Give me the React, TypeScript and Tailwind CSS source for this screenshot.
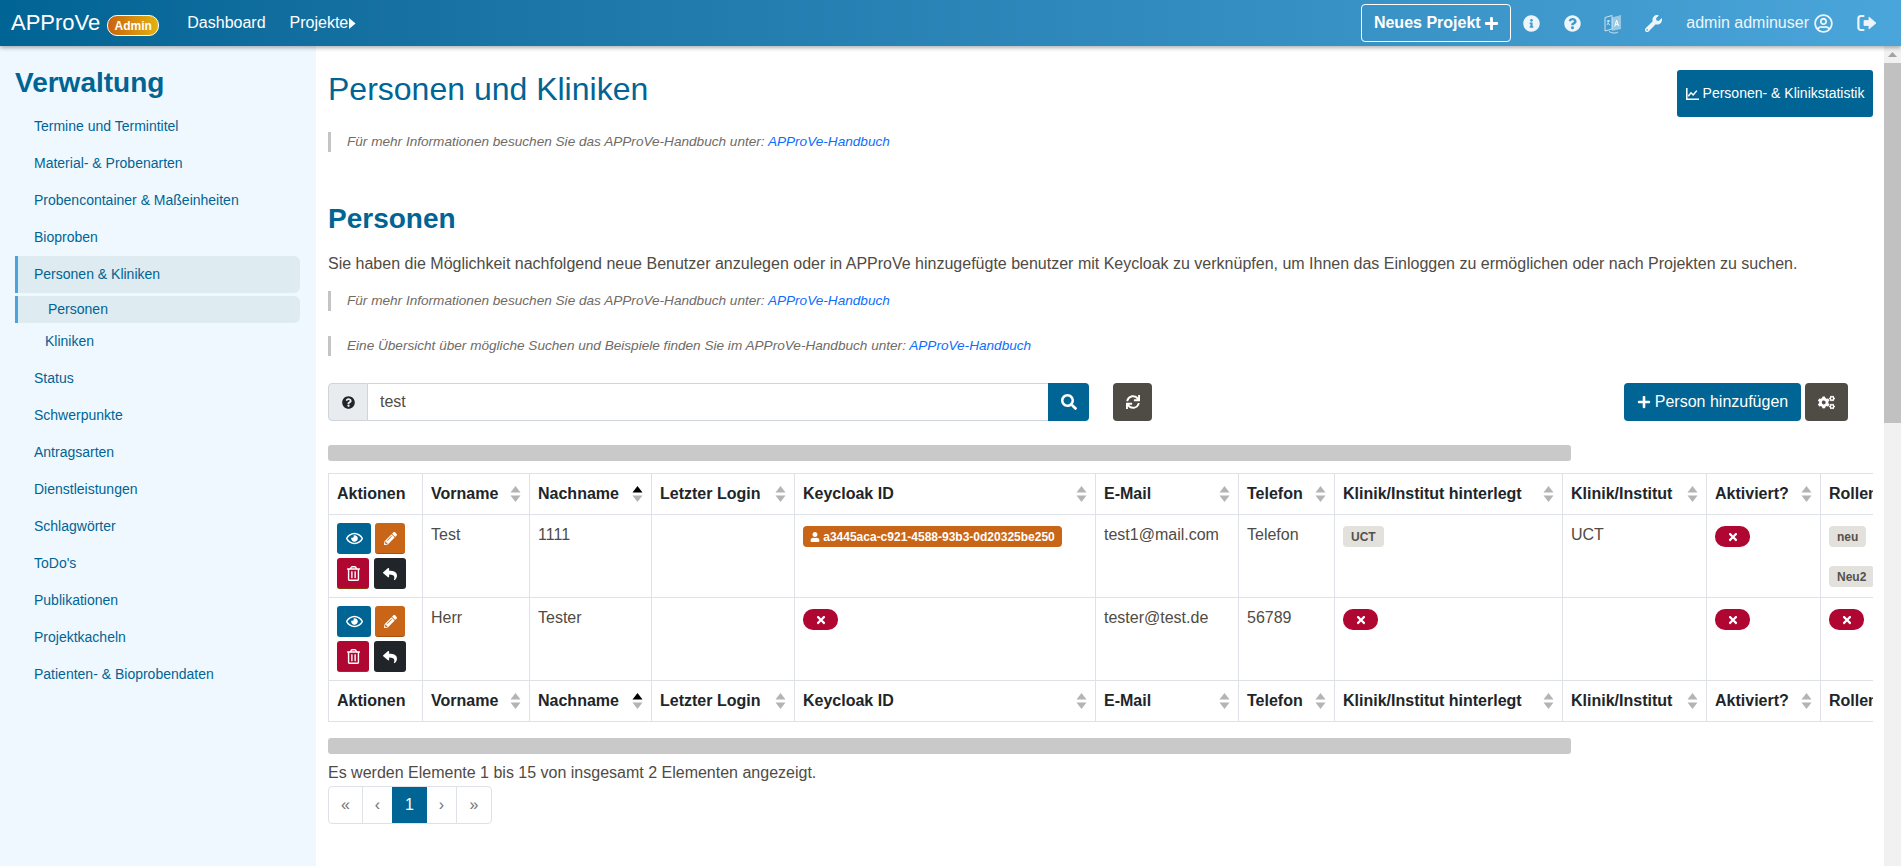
import type { ReactNode } from "react";
import {
  FaCogs,
  FaInfoCircle,
  FaPencilAlt,
  FaPlus,
  FaQuestionCircle,
  FaRegEye,
  FaRegTrashAlt,
  FaRegUserCircle,
  FaReply,
  FaSearch,
  FaSync,
  FaTimes,
  FaUser,
  FaWrench,
} from "react-icons/fa";

const menu = [
  "Termine und Termintitel",
  "Material- & Probenarten",
  "Probencontainer & Maßeinheiten",
  "Bioproben",
];
const menuAfter = [
  "Status",
  "Schwerpunkte",
  "Antragsarten",
  "Dienstleistungen",
  "Schlagwörter",
  "ToDo's",
  "Publikationen",
  "Projektkacheln",
  "Patienten- & Bioprobendaten",
];

const columns = [
  { label: "Aktionen", width: 94, sort: false },
  { label: "Vorname", width: 107, sort: true },
  { label: "Nachname", width: 122, sort: true, active: true },
  { label: "Letzter Login", width: 143, sort: true },
  { label: "Keycloak ID", width: 301, sort: true },
  { label: "E-Mail", width: 143, sort: true },
  { label: "Telefon", width: 96, sort: true },
  { label: "Klinik/Institut hinterlegt", width: 228, sort: true },
  { label: "Klinik/Institut", width: 144, sort: true },
  { label: "Aktiviert?", width: 114, sort: true },
  { label: "Rollen", width: 100, sort: true },
];

function TranslateIcon() {
  return (
    <svg width="18" height="21" viewBox="0 0 18 21" fill="none" aria-hidden>
      <path d="M1 4.5 8 2.5V16L1 18Z" stroke="currentColor" strokeWidth="1" opacity="0.85" />
      <path d="M8 4.5 17 2V16L8 18Z" fill="currentColor" opacity="0.55" />
      <path d="M5 18.5c3 2 7 2 9 .5" stroke="currentColor" strokeWidth="1" opacity="0.85" />
      <path d="M10.8 13.5 12.6 7 14.5 13M11.4 11.3h2.6" stroke="#ffffff" strokeWidth="1" />
      <path d="M2.7 8h3.6M4.3 7v1c0 2-.8 3.5-1.7 4.2M3.9 10.3l2 1.7" stroke="currentColor" strokeWidth="0.9" />
    </svg>
  );
}

function SignOutIcon() {
  return (
    <svg width="20" height="18" viewBox="0 0 20 18" aria-hidden>
      <path d="M6.5 2H4a2.6 2.6 0 0 0-2.6 2.6v8.8A2.6 2.6 0 0 0 4 16h2.5" fill="none" stroke="currentColor" strokeWidth="2.2" strokeLinecap="round" />
      <path d="M7 6.5h5V3l7 6-7 6v-3.5H7Z" fill="currentColor" stroke="currentColor" strokeWidth="0.8" strokeLinejoin="round" />
    </svg>
  );
}

function ChartIcon() {
  return (
    <svg width="13" height="12" viewBox="0 0 13 12" fill="none" aria-hidden>
      <path d="M.8 0v11.2H13" stroke="currentColor" strokeWidth="1.5" />
      <path d="M2.2 8.2 5 4.8l2.2 2.2 3.6-4.4" stroke="currentColor" strokeWidth="1.5" />
    </svg>
  );
}

function Note({ children }: { children: ReactNode }) {
  return (
    <div className="flex h-[20px] items-center border-l-[3px] border-[#c4c4c4] pl-[16px] text-[13.6px] italic text-[#6f6b66]">
      {children}
    </div>
  );
}

function HandbookLink() {
  return <a className="text-[#0d6efd]">APProVe-Handbuch</a>;
}

function SortArrows({ active }: { active?: boolean }) {
  return (
    <svg width="11" height="16" viewBox="0 0 11 16" aria-hidden className="shrink-0">
      <path d="M5.5 0 10.5 6.5H.5Z" fill={active ? "#000000" : "#b4b4b4"} />
      <path d="M5.5 16 .5 9.5H10.5Z" fill="#b4b4b4" />
    </svg>
  );
}

function HeaderRow() {
  return (
    <tr className="h-[41px]">
      {columns.map((c) => (
        <th key={c.label} className="border border-[#dee2e6] px-[8px] py-0 text-left text-[16px] font-bold text-[#212529]">
          <div className="flex items-center justify-between whitespace-nowrap">
            <span>{c.label}</span>
            {c.sort && <SortArrows active={c.active} />}
          </div>
        </th>
      ))}
    </tr>
  );
}

function Cross() {
  return (
    <span className="inline-flex h-[21px] w-[35px] items-center justify-center rounded-[10px] bg-[#b00632] text-[12px] text-white">
      <FaTimes />
    </span>
  );
}

function GrayBadge({ children }: { children: ReactNode }) {
  return (
    <span className="inline-flex h-[21px] items-center rounded-[4px] bg-[#e3e1dc] px-[8px] text-[12px] font-bold text-[#55514b]">
      {children}
    </span>
  );
}

function Actions() {
  return (
    <div className="flex flex-col gap-[4px]">
      <div className="flex gap-[4px]">
        <button className="flex h-[31px] w-[34px] items-center justify-center rounded-[3px] bg-[#006494] text-[17px] text-white">
          <FaRegEye />
        </button>
        <button className="flex h-[31px] w-[30px] items-center justify-center rounded-[3px] border-b border-[#a84f0c] bg-[#c96516] text-[13px] text-white">
          <FaPencilAlt />
        </button>
      </div>
      <div className="flex gap-[5px]">
        <button className="flex h-[31px] w-[32px] items-center justify-center rounded-[3px] border-b border-[#8a3a0c] bg-[#b00632] text-[15px] text-white">
          <FaRegTrashAlt />
        </button>
        <button className="flex h-[31px] w-[32px] items-center justify-center rounded-[3px] bg-[#212529] text-[14px] text-white">
          <FaReply />
        </button>
      </div>
    </div>
  );
}

function Cell({ children }: { children?: ReactNode }) {
  return <td className="border border-[#dee2e6] px-[8px] py-[8px] align-top text-[16px] leading-[24px] text-[#4f4b45]">{children}</td>;
}

function ScrollBar() {
  return <div className="h-[16px] w-[1243px] rounded-[3px] bg-[#c9c9c9]" />;
}

export default function App() {
  return (
    <div className="flex h-[866px] flex-col overflow-hidden bg-white font-['Liberation_Sans',Arial,sans-serif] text-[#4f4b45]">
      <header className="relative z-10 flex h-[46px] shrink-0 items-center bg-gradient-to-r from-[#006494] to-[#4aa5da] text-white shadow-[0_2px_4px_rgba(0,0,0,0.3)]">
        <span className="ml-[11px] text-[22px] leading-none">APProVe</span>
        <span className="ml-[7px] mt-[5px] flex h-[21px] w-[52px] items-center justify-center rounded-[10px] border border-white bg-gradient-to-r from-[#c8620f] to-[#e2b20e] text-[12px] font-bold">
          Admin
        </span>
        <span className="ml-[28px] text-[16px]">Dashboard</span>
        <span className="ml-[24px] flex items-center text-[16px]">
          Projekte
          <svg width="7" height="11" viewBox="0 0 7 11" aria-hidden className="ml-[1px]">
            <path d="M0 0 6.5 5.5 0 11Z" fill="currentColor" />
          </svg>
        </span>
        <div className="ml-auto flex items-center">
          <button className="flex h-[38px] w-[150px] items-center justify-center gap-[3px] rounded-[4px] border border-white text-[16px] font-bold">
            Neues Projekt <FaPlus className="text-[15px]" />
          </button>
          <FaInfoCircle className="ml-[12px] text-[17px] text-[#eef5fa]" />
          <FaQuestionCircle className="ml-[24px] text-[17px] text-[#eef5fa]" />
          <span className="ml-[23px] text-[#dfeef7]">
            <TranslateIcon />
          </span>
          <FaWrench className="ml-[23px] text-[17px] text-[#eef5fa]" />
          <span className="ml-[24px] text-[16px] text-[#eef5fa]">admin adminuser</span>
          <FaRegUserCircle className="ml-[5px] text-[19px] text-[#eef5fa]" />
          <span className="ml-[24px] mr-[24px] text-[#eef5fa]">
            <SignOutIcon />
          </span>
        </div>
      </header>

      <div className="flex min-h-0 flex-1">
        <aside className="w-[316px] shrink-0 bg-[#f0f8ff] pl-[15px] pr-[16px] text-[14px] text-[#006494]">
          <h2 className="mt-[20px] h-[34px] text-[28px] font-bold leading-[34px]">Verwaltung</h2>
          <nav className="mt-[8px] flex flex-col">
            {menu.map((m) => (
              <a key={m} className="flex h-[37px] items-center pl-[19px]">
                {m}
              </a>
            ))}
            <a className="flex h-[37px] items-center rounded-r-[6px] border-l-[3px] border-[#4aa3df] bg-[#deebf0] pl-[16px]">
              Personen &amp; Kliniken
            </a>
            <a className="mt-[3px] flex h-[27px] items-center rounded-r-[6px] border-l-[3px] border-[#4aa3df] bg-[#deebf0] pl-[30px]">
              Personen
            </a>
            <a className="flex h-[37px] items-center pl-[30px]">Kliniken</a>
            <div className="flex flex-col">
              {menuAfter.map((m) => (
                <a key={m} className="flex h-[37px] items-center pl-[19px]">
                  {m}
                </a>
              ))}
            </div>
          </nav>
        </aside>

        <main className="min-w-0 flex-1 pl-[12px] pr-[11px]">
          <div className="mt-[24px] flex items-start justify-between">
            <h1 className="mt-[0px] text-[32px] leading-[38px] text-[#006494]">Personen und Kliniken</h1>
            <button className="flex h-[47px] w-[196px] items-center justify-center gap-[4px] rounded-[3px] bg-[#006494] text-[14px] text-white">
              <ChartIcon /> Personen- &amp; Klinikstatistik
            </button>
          </div>
          <div className="mt-[15px]">
            <Note>
              <span>
                Für mehr Informationen besuchen Sie das APProVe-Handbuch unter: <HandbookLink />
              </span>
            </Note>
          </div>
          <h2 className="mt-[50px] text-[28px] font-bold leading-[34px] text-[#006494]">Personen</h2>
          <p className="mt-[16px] text-[16px] leading-[24px]">
            Sie haben die Möglichkeit nachfolgend neue Benutzer anzulegen oder in APProVe hinzugefügte benutzer mit Keycloak zu verknüpfen, um Ihnen das Einloggen zu ermöglichen oder nach Projekten zu suchen.
          </p>
          <div className="mt-[15px]">
            <Note>
              <span>
                Für mehr Informationen besuchen Sie das APProVe-Handbuch unter: <HandbookLink />
              </span>
            </Note>
          </div>
          <div className="mt-[25px]">
            <Note>
              <span>
                Eine Übersicht über mögliche Suchen und Beispiele finden Sie im APProVe-Handbuch unter: <HandbookLink />
              </span>
            </Note>
          </div>

          <div className="mt-[27px] flex h-[38px] items-center">
            <div className="flex h-full w-[761px]">
              <span className="flex w-[40px] items-center justify-center rounded-l-[4px] border border-[#ced4da] bg-[#e9ecef] text-[13px] text-[#212529]">
                <FaQuestionCircle />
              </span>
              <input
                readOnly
                value="test"
                className="min-w-0 flex-1 border-y border-[#ced4da] px-[12px] text-[16px] text-[#4f4b45] outline-none"
              />
              <button className="flex w-[41px] items-center justify-center rounded-r-[4px] bg-[#006494] text-[16px] text-white">
                <FaSearch />
              </button>
            </div>
            <button className="ml-[24px] flex h-full w-[39px] items-center justify-center rounded-[4px] bg-[#4f4b45] text-[14px] text-white">
              <FaSync />
            </button>
            <button className="ml-auto flex h-full w-[177px] items-center justify-center gap-[4px] rounded-[4px] bg-[#006494] text-[16px] text-white">
              <FaPlus className="text-[14px]" /> Person hinzufügen
            </button>
            <button className="ml-[4px] mr-[25px] flex h-full w-[43px] items-center justify-center rounded-[4px] bg-[#4f4b45] text-[17px] text-white">
              <FaCogs />
            </button>
          </div>

          <div className="mt-[24px]">
            <ScrollBar />
          </div>

          <div className="mt-[12px] overflow-hidden">
            <table className="w-[1592px] table-fixed border-collapse">
              <colgroup>
                {columns.map((c) => (
                  <col key={c.label} style={{ width: c.width }} />
                ))}
              </colgroup>
              <thead>
                <HeaderRow />
              </thead>
              <tbody>
                <tr className="h-[83px]">
                  <Cell>
                    <Actions />
                  </Cell>
                  <Cell>Test</Cell>
                  <Cell>1111</Cell>
                  <Cell />
                  <Cell>
                    <span className="mt-[3px] inline-flex h-[21px] w-[259px] items-center justify-center gap-[3px] rounded-[4px] bg-[#c96516] text-[12px] font-bold leading-none text-white">
                      <FaUser className="text-[10px]" /> a3445aca-c921-4588-93b3-0d20325be250
                    </span>
                  </Cell>
                  <Cell>test1@mail.com</Cell>
                  <Cell>Telefon</Cell>
                  <Cell>
                    <div className="mt-[3px] flex">
                      <GrayBadge>UCT</GrayBadge>
                    </div>
                  </Cell>
                  <Cell>UCT</Cell>
                  <Cell>
                    <div className="mt-[3px] flex">
                      <Cross />
                    </div>
                  </Cell>
                  <Cell>
                    <div className="mt-[3px] flex flex-col items-start gap-[19px]">
                      <GrayBadge>neu</GrayBadge>
                      <GrayBadge>Neu2</GrayBadge>
                    </div>
                  </Cell>
                </tr>
                <tr className="h-[83px]">
                  <Cell>
                    <Actions />
                  </Cell>
                  <Cell>Herr</Cell>
                  <Cell>Tester</Cell>
                  <Cell />
                  <Cell>
                    <div className="mt-[3px] flex">
                      <Cross />
                    </div>
                  </Cell>
                  <Cell>tester@test.de</Cell>
                  <Cell>56789</Cell>
                  <Cell>
                    <div className="mt-[3px] flex">
                      <Cross />
                    </div>
                  </Cell>
                  <Cell />
                  <Cell>
                    <div className="mt-[3px] flex">
                      <Cross />
                    </div>
                  </Cell>
                  <Cell>
                    <div className="mt-[3px] flex">
                      <Cross />
                    </div>
                  </Cell>
                </tr>
              </tbody>
              <tfoot>
                <HeaderRow />
              </tfoot>
            </table>
          </div>

          <div className="mt-[16px]">
            <ScrollBar />
          </div>
          <p className="mt-[10px] text-[16px] leading-[18px]">Es werden Elemente 1 bis 15 von insgesamt 2 Elementen angezeigt.</p>
          <div className="mt-[4px] flex h-[38px] w-[164px] overflow-hidden rounded-[4px] border border-[#dee2e6] text-[16px] text-[#6c757d]">
            <span className="flex w-[34px] items-center justify-center border-r border-[#dee2e6]">«</span>
            <span className="flex w-[29px] items-center justify-center">‹</span>
            <span className="flex w-[35px] items-center justify-center bg-[#006494] text-white">1</span>
            <span className="flex w-[30px] items-center justify-center border-r border-[#dee2e6]">›</span>
            <span className="flex flex-1 items-center justify-center">»</span>
          </div>
        </main>

        <div className="flex w-[17px] shrink-0 flex-col bg-[#f1f1f1]">
          <div className="flex h-[17px] items-center justify-center">
            <svg width="9" height="5" viewBox="0 0 9 5" aria-hidden>
              <path d="M4.5 0 9 5H0Z" fill="#a3a3a3" />
            </svg>
          </div>
          <div className="h-[360px] bg-[#c1c1c1]" />
        </div>
      </div>
    </div>
  );
}
